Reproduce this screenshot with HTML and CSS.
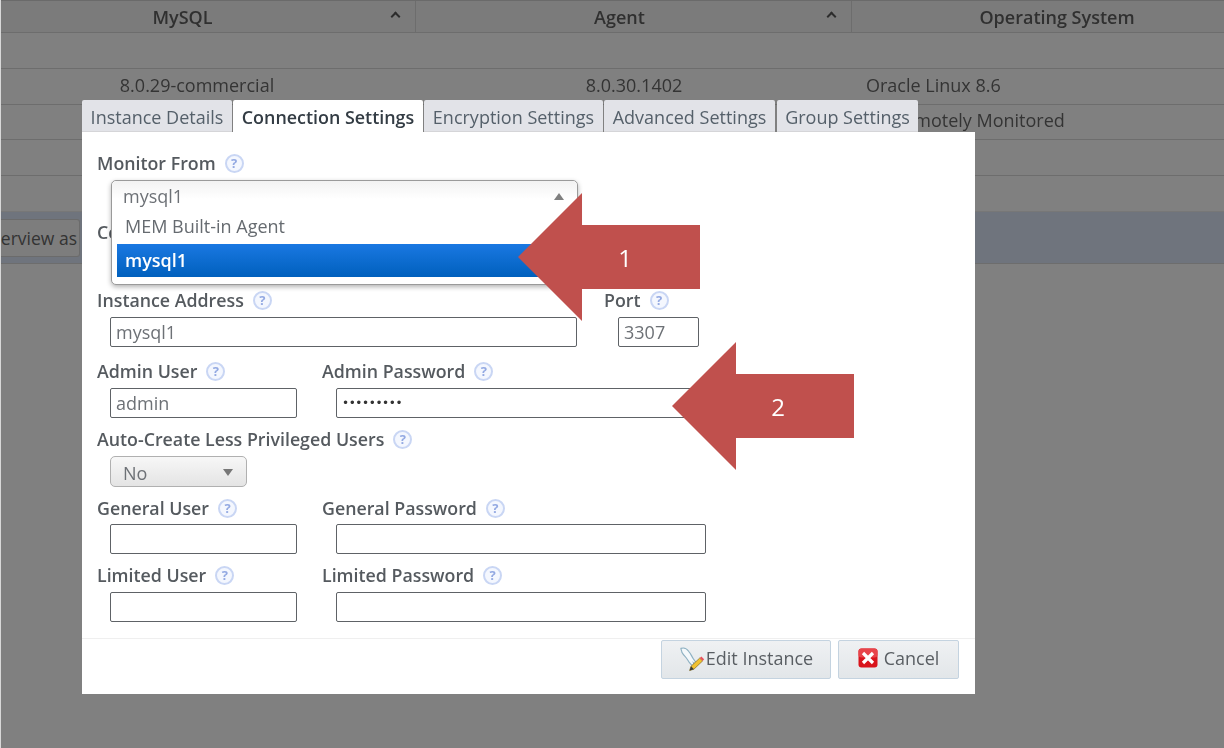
FILE: index.html
```html
<!DOCTYPE html>
<html lang="en">
<head>
<meta charset="utf-8">
<title>Edit Instance</title>
<link rel="stylesheet" href="styles.css">
</head>
<body>
<div class="stage">
  <div class="table">
    <div class="row head">
      <div class="cell c2">MySQL<span class="caret"></span></div>
      <div class="cell c3">Agent<span class="caret"></span></div>
      <div class="cell c4">Operating System</div>
    </div>
    <div class="row"></div>
    <div class="row">
      <div class="cell c2">8.0.29-commercial</div>
      <div class="cell c3">8.0.30.1402</div>
      <div class="cell c4 left">Oracle Linux 8.6</div>
    </div>
    <div class="row">
      <div class="cell c2"></div>
      <div class="cell c3"></div>
      <div class="cell c4 left remote">Remotely Monitored</div>
    </div>
    <div class="row"></div>
    <div class="row"></div>
    <div class="row band"><div class="overview"><span>Overview as</span></div></div>
  </div>

  <div class="modal">
    <div class="tabs">
      <div class="tab t1">Instance Details</div>
      <div class="tab t2 active">Connection Settings</div>
      <div class="tab t3">Encryption Settings</div>
      <div class="tab t4">Advanced Settings</div>
      <div class="tab t5">Group Settings</div>
    </div>
    <div class="panel">
      <div class="form">
        <div class="group g-first">
          <label class="lbl">Monitor From <span class="help">?</span></label>
          <div class="select wide"></div>
        </div>
        <div class="group g-conn">
          <label class="lbl">Connection Method <span class="help">?</span></label>
          <div class="select wide"></div>
        </div>
        <div class="fields g-addr">
          <div class="group f-addr">
            <label class="lbl">Instance Address <span class="help">?</span></label>
            <div class="input wide">mysql1</div>
          </div>
          <div class="group">
            <label class="lbl">Port <span class="help">?</span></label>
            <div class="input port">3307</div>
          </div>
        </div>
        <div class="fields g-admin">
          <div class="group f-user">
            <label class="lbl">Admin User <span class="help">?</span></label>
            <div class="input user">admin</div>
          </div>
          <div class="group">
            <label class="lbl">Admin Password <span class="help">?</span></label>
            <div class="input pass dots">•••••••••</div>
          </div>
        </div>
        <div class="group g-auto">
          <label class="lbl">Auto-Create Less Privileged Users <span class="help">?</span></label>
          <div class="select small">No<span class="tri down"></span></div>
        </div>
        <div class="fields g-gen">
          <div class="group f-user">
            <label class="lbl">General User <span class="help">?</span></label>
            <div class="input user"></div>
          </div>
          <div class="group">
            <label class="lbl">General Password <span class="help">?</span></label>
            <div class="input pass"></div>
          </div>
        </div>
        <div class="fields g-lim">
          <div class="group f-user">
            <label class="lbl">Limited User <span class="help">?</span></label>
            <div class="input user"></div>
          </div>
          <div class="group">
            <label class="lbl">Limited Password <span class="help">?</span></label>
            <div class="input pass"></div>
          </div>
        </div>
      </div>
      <div class="footer">
        <button class="btn edit" type="button">
          <svg class="ico-edit" width="27" height="28" viewBox="0 0 28 28" aria-hidden="true">
            <path d="M2 3c3-1 6 0 8 3 2 2 3 5 5 8 1 2 3 4 5 5-2 0-4 0-5-1l1 4c-2-1-4-2-5-4-2-3-3-5-5-7-1-1-2-2-3-4 0-1-1-3-1-4z" fill="#f4f8fb" stroke="#8db0c2" stroke-width="1.200"/>
            <path d="M11 26l1.500-4.500 9-8.500 3 3-9 8.500z" fill="#f2c230" stroke="#7d6a2a" stroke-width=".7"/>
            <path d="M21.500 13l1.700-1.600 2.900 2.900L24.500 16z" fill="#e8545c"/>
            <path d="M11 26l1.500-4.500 3 3z" fill="#3a3a3a"/>
          </svg>
          <span class="btn-text">Edit Instance</span>
        </button>
        <button class="btn cancel" type="button">
          <svg class="ico-x" width="20" height="20" viewBox="0 0 20 20" aria-hidden="true">
            <rect x=".5" y=".5" width="19" height="19" rx="3" fill="#d9141c"/>
            <rect x=".5" y=".5" width="19" height="9" rx="3" fill="#e8444a"/>
            <path d="M5 5l10 10M15 5L5 15" stroke="#fff" stroke-width="3.200"/>
          </svg>
          <span class="btn-text">Cancel</span>
        </button>
      </div>
    </div>
  </div>

  <div class="dropdown">
    <div class="dd-head">mysql1<span class="tri up"></span></div>
    <div class="dd-item">MEM Built-in Agent</div>
    <div class="dd-item selected">mysql1</div>
  </div>

  <div class="arrow a1"><svg width="182" height="128" viewBox="0 0 182 128" aria-hidden="true"><path d="M0 64L64 0V32H182V96H64V128Z" fill="#c0504d"/></svg><span class="num">1</span></div>
  <div class="arrow a2"><svg width="182" height="128" viewBox="0 0 182 128" aria-hidden="true"><path d="M0 64L64 0V32H182V96H64V128Z" fill="#c0504d"/></svg><span class="num">2</span></div>
</div>
</body>
</html>
```
FILE: styles.css
```css
* { box-sizing: border-box; }
html, body { margin: 0; padding: 0; }
body { background: #fff; font-family: "Open Sans", "Liberation Sans", sans-serif; }

.stage {
  position: relative;
  width: 1224px;
  height: 748px;
  overflow: hidden;
  background: #808080;
}
.stage::before {
  content: ""; position: absolute; left: 0; top: 0; bottom: 0; width: 1px; background: #d8d8d8; z-index: 1;
}

.table { filter: blur(.4px); color: #343434; font-size: 18px; }
.row { display: flex; height: 36px; border-bottom: 1px solid #6d6d6d; }
.row.head { height: 33px; background: #7b7b7b; border-top: 1px solid #6a6a6a; font-weight: 600; color: #303030; }
.row:nth-child(4) { height: 35px; }
.row.band { height: 53px; background: #6f747d; border-top: 1px solid #777; margin-top: -1px; }
.cell { display: flex; align-items: center; justify-content: center; position: relative; padding-bottom: 3px; }
.head .cell { padding-bottom: 0; }
.c2 { width: 416px; padding-right: 22px; }
.c3 { width: 436px; }
.c4 { width: 372px; }
.c4.left { justify-content: flex-start; padding-left: 14px; }
.c4.remote { padding-left: 41px; padding-bottom: 4px; }
.head .c2, .head .c3 { border-right: 1px solid #6d6d6d; padding-right: 28px; }
.head .c2 { padding-right: 50px; }
.head .c4 { padding-left: 38px; }
.caret {
  position: absolute; right: 16px; top: 12px;
  width: 7px; height: 7px;
  border-left: 2px solid #2c2c2c; border-top: 2px solid #2c2c2c;
  transform: rotate(45deg);
}
.overview {
  width: 80px; height: 38px; margin-top: 7px;
  border: 1px solid #6b6b6b; border-left: 0; border-radius: 0 3px 3px 0;
  background: #7d7d7d; color: #333; font-size: 17.500px;
  display: flex; align-items: center; justify-content: flex-end;
  overflow: hidden; white-space: nowrap; padding-right: 2px;
}

.modal { position: absolute; left: 82px; top: 100px; width: 893px; filter: blur(.4px); }
.tabs { display: flex; height: 32px; align-items: stretch; }
.tab {
  background: #e2e3e8; color: #55606a; font-size: 18px;
  display: flex; align-items: center; justify-content: center;
  border-radius: 2px 2px 0 0; white-space: nowrap; padding-top: 2px;
  border-bottom: 1px solid #d5d5d8;
}
.tab.active { background: #fff; color: #333c44; font-weight: 600; border-bottom: 0; font-size: 17.900px; }
.t1 { width: 150px; }
.t2 { width: 190px; margin-left: 1px; }
.t3 { width: 179px; margin-left: 1px; }
.t4 { width: 171px; margin-left: 1px; }
.t5 { width: 141px; margin-left: 2px; }

.panel { background: #fff; height: 562px; display: flex; flex-direction: column; }
.form { flex: 1; padding: 21px 0 0 15px; color: #4a4f55; }
.lbl { display: flex; align-items: center; gap: 9px; height: 20px; font-size: 17.800px; font-weight: 600; color: #555a5f; white-space: nowrap; }
.help {
  display: inline-flex; align-items: center; justify-content: center;
  width: 19px; height: 19px; border-radius: 50%;
  border: 2px solid #c9d6f4; background: #f4f7fe;
  color: #93a9e2; font-size: 13px; font-weight: 700; line-height: 1;
}
.group > .input, .group > .select { margin-left: 13px; margin-top: 7px; }
.fields > .group:last-child > .input { margin-left: 14px; }
.fields { display: flex; }
.f-addr { width: 507px; }
.f-user { width: 225px; }

.g-conn { margin-top: 12px; }
.g-conn .select { margin-top: 5px; }
.g-addr { margin-top: 13px; }
.g-admin { margin-top: 14px; }
.g-auto { margin-top: 11px; }
.g-gen { margin-top: 11px; }
.g-gen .input { margin-top: 6px; }
.g-lim { margin-top: 11px; }

.input {
  height: 30px; border: 1px solid #5e6266; border-radius: 2px;
  background: #fff; color: #6d7176; font-size: 18px;
  padding: 0 5px; display: flex; align-items: center;
}
.input.wide { width: 467px; }
.input.port { width: 81px; }
.input.user { width: 187px; }
.input.pass { width: 370px; }
.input.dots { font-size: 12px; color: #333; letter-spacing: -.4px; padding-left: 5px; font-family: "DejaVu Sans", sans-serif; }
.select { height: 30px; background: #fff; }
.select.wide { width: 467px; }
.select.small {
  width: 137px; height: 31px; position: relative;
  border: 1px solid #b0b0b0; border-radius: 5px;
  background: linear-gradient(#f7f7f7, #e4e4e4);
  color: #6d7176; font-size: 18px; padding: 2px 0 0 12px;
  display: flex; align-items: center;
}
.tri { position: absolute; width: 0; height: 0; border-left: 5px solid transparent; border-right: 5px solid transparent; }
.tri.down { border-top: 7px solid #777; right: 13px; top: 12px; }
.tri.up { border-bottom: 7px solid #7f7f7f; right: 13px; top: 12px; }

.footer {
  height: 56px; border-top: 1px solid #efefef;
  display: flex; justify-content: flex-end; align-items: flex-start;
  gap: 7px; padding: 1px 16px 0 0;
}
.btn {
  height: 39px; border: 1px solid #c4d3e0; border-radius: 2px;
  background: linear-gradient(#eff1f3, #e2e6e9);
  color: #595e63; font: 400 18px "Open Sans", sans-serif;
  display: flex; align-items: center; justify-content: center; padding: 0;
}
.btn-text { margin-bottom: 4px; }
.ico-edit { margin-bottom: 2px; }
.ico-x { margin-bottom: 3px; }
.btn.edit { width: 170px; gap: 0; }
.btn.cancel { width: 121px; gap: 6px; }

.dropdown {
  position: absolute; left: 111px; top: 180px; width: 467px; height: 105px;
  background: #fff; border: 1px solid #9a9a9a; border-radius: 5px;
  box-shadow: 0 2px 5px rgba(0,0,0,.3);
  color: #666b70; font-size: 18px; filter: blur(.4px);
  padding: 0 5px;
}
.dd-head {
  height: 30px; margin: 0 -5px; padding-left: 11px; position: relative;
  display: flex; align-items: center; color: #6d7176;
  background: linear-gradient(#f2f2f2, #fff 60%); border-radius: 5px 5px 0 0;
}
.dd-item { height: 33px; display: flex; align-items: center; padding: 0 0 4px 8px; }
.dd-item.selected {
  color: #fff; font-weight: 600; padding-bottom: 2px;
  background: linear-gradient(#1a78e2, #0060bd);
}

.arrow { position: absolute; width: 182px; height: 128px; }
.arrow svg { display: block; }
.a1 { left: 518px; top: 193px; }
.a2 { left: 672px; top: 342px; }
.num {
  position: absolute; left: 87px; top: 32px; width: 40px; height: 64px;
  display: flex; align-items: center; justify-content: center;
  color: #fff; font-size: 24px; font-family: "Open Sans", sans-serif;
}
.a2 .num { left: 86px; }
```
